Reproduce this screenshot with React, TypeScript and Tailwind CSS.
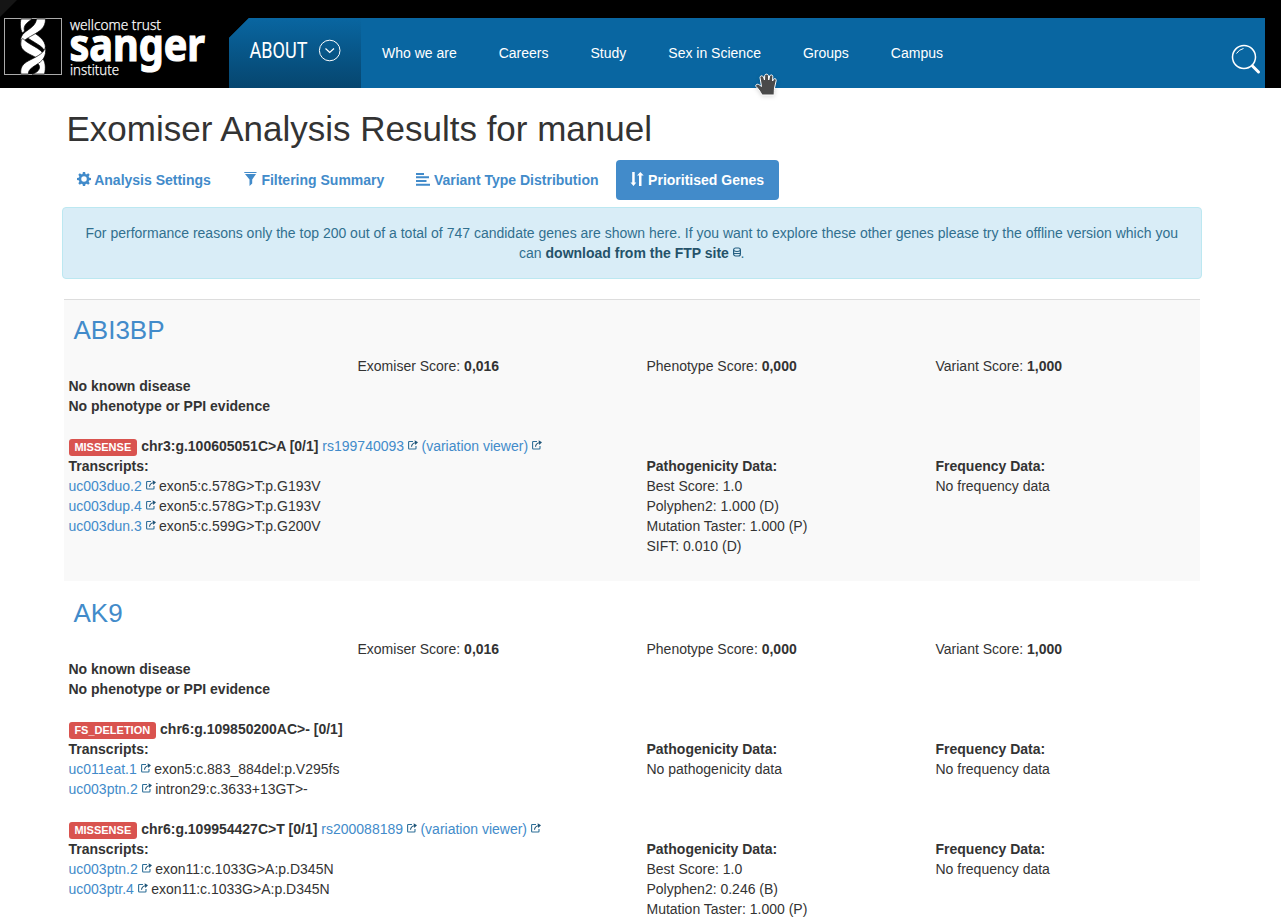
import React from "react";

const navItems = ["Who we are", "Careers", "Study", "Sex in Science", "Groups", "Campus"];

function Ext() {
  return (
    <svg className="ml-[3.900px] inline-block h-[10px] w-[10px] align-[1px]" viewBox="0 0 10 10" fill="none">
      <path d="M5 1.500H1.300Q.6 1.500 .6 2.200V8.300Q.6 9 1.300 9H7.300Q8 9 8 8.300V6" stroke="#2d6f98" strokeWidth="1.100" />
      <path d="M3.500 6.800C3.700 4.500 5 3 7.500 2.700" stroke="#1f5578" strokeWidth="1.100" />
      <path d="M6.600 .2L10 2.300L7.300 5Z" fill="#1f5578" />
    </svg>
  );
}

function Link({ children }: { children: React.ReactNode }) {
  return (
    <span className="whitespace-nowrap text-[#428bca]">
      {children}
      <Ext />
    </span>
  );
}

function Logo() {
  return (
    <svg className="h-[88px] w-[229px] shrink-0" viewBox="0 0 229 88">
      <path d="M0 0H17L0 17Z" fill="#151515" />
      <rect x="4.5" y="18.5" width="57" height="56" fill="none" stroke="#aaa" />
      <g fill="#fff" stroke="#000" strokeWidth=".7">
        <path d="M21 19H32L27.500 22.500C24.500 25 23.500 28 24.500 31L22.500 33C20 29 20 23 21 19Z" />
        <path d="M25 34.500L31.500 31C37 35 45.500 39 45.500 48V52C43 47 38 44.500 34 42C30 39.500 27 38 25 34.500Z" />
        <path d="M36.500 19H45.500C45.500 28 40 31 33 35C26 39 22 41 21 46C19.500 37 22 34 28 30C33 26.500 36 23.500 36.500 19Z" />
        <path d="M20.800 44C21 39.500 22 37.500 24 39.500C29 45 41 48 44 55L39 60C36 57 32 55.500 29 54C24 51 21 49 20.800 44Z" />
        <path d="M36 62L42 58C45.500 61 46 68 44.500 74H32C37 73 41 69 39 65Z" />
        <path d="M45.500 47C46.500 57 43 60.500 36 65C31 68 28 70.500 28.500 74H20.800C20 66 24 63 31 59.500C38 56 44 53 45.500 47Z" />
      </g>
      <g fill="#fff" fontFamily="Noto Sans, sans-serif">
        <text x="70" y="29.500" fontSize="15" fontWeight="300" stroke="#fff" strokeWidth=".25" textLength="91" lengthAdjust="spacingAndGlyphs">wellcome trust</text>
        <text x="69.500" y="60.500" fontSize="45" fontWeight="700" stroke="#fff" strokeWidth="1.200" textLength="135.500" lengthAdjust="spacingAndGlyphs">sanger</text>
        <text x="70" y="75" fontSize="15" fontWeight="300" stroke="#fff" strokeWidth=".25" textLength="49" lengthAdjust="spacingAndGlyphs">institute</text>
      </g>
    </svg>
  );
}

function Header() {
  return (
    <header className="relative flex h-[88px] bg-black text-white">
      <Logo />
      <nav className="mt-[18px] flex h-[70px] w-[1036px] bg-[#0966a1] [clip-path:polygon(20px_0,100%_0,100%_100%,0_100%,0_20px)]">
        <div className="flex w-[132px] items-start bg-linear-to-b from-[#0966a1] to-[#06466f]">
          <svg className="h-[70px] w-[132px]" viewBox="0 0 132 70" fill="none">
            <text x="20.500" y="40.300" fill="#fff" fontFamily="Roboto, sans-serif" fontSize="21.500" textLength="58" lengthAdjust="spacingAndGlyphs">ABOUT</text>
            <circle cx="100.700" cy="32.500" r="10.300" stroke="#fff" />
            <path d="M96.500 30.500L100.700 34.500L105 30.500" stroke="#fff" strokeWidth="1.200" />
          </svg>
        </div>
        <ul className="flex flex-1 gap-[42px] pt-[25px] pl-[21px] text-[14px] leading-5">
          {navItems.map((n) => <li key={n}>{n}</li>)}
        </ul>
        <svg className="mt-[25px] mr-[3px] h-[34px] w-[32px]" viewBox="0 0 32 34" fill="none" stroke="#fff">
          <circle cx="14" cy="14" r="11.500" strokeWidth="1.500" />
          <path d="M6.500 10.500Q9 6.500 13.500 5.500" strokeWidth="1" />
          <path d="M22.500 23L28.500 29" strokeWidth="3" strokeLinecap="round" />
        </svg>
      </nav>
      <svg className="absolute top-[70px] left-[752px] h-[30px] w-[28px] drop-shadow-sm" viewBox="0 0 28 30">
        <path d="M10 25C8 21 6 18.500 4 16.500C3 14.500 5.500 13.500 7.500 15L9.500 16.500L8 7.500C8 5.500 10.700 5.200 11.500 7L12.500 10L12.700 5.500C13 3.700 16 3.700 16.400 5.500L16.700 10L17.700 6C18.300 4.200 21 4.800 20.800 6.500L20.600 11L21.300 9.500C22.200 8 24.500 8.600 24.200 10.500L22.500 18C22.300 20.500 22.200 22 22.200 25Z" fill="#4a4a4a" stroke="#fff" strokeWidth="1" />
      </svg>
    </header>
  );
}

function TabIcon({ kind }: { kind: number }) {
  return (
    <svg className="-ml-[.5px] mr-[3.700px] mb-[2px] h-[14px] w-[14px]" viewBox="0 0 14 14" fill="currentColor">
      {kind === 0 && (
        <>
          <circle cx="7" cy="7" r="4" fill="none" stroke="currentColor" strokeWidth="2.500" />
          <path d="M5.900 0H8.100L8.600 2.500H5.400ZM5.900 14H8.100L8.600 11.500H5.400ZM0 5.900V8.100L2.500 8.600V5.400ZM14 5.900V8.100L11.500 8.600V5.400ZM1.300 2.800L2.800 1.300L5 2.800L2.800 5ZM12.700 2.800L11.200 1.300L9 2.800L11.200 5ZM1.300 11.200L2.800 12.700L5 11.200L2.800 9ZM12.700 11.200L11.200 12.700L9 11.200L11.200 9Z" />
        </>
      )}
      {kind === 1 && <path d="M.3 0H12.500V1H.3ZM1 2H12L8.200 7.500V11.500L5.500 14V7.500Z" />}
      {kind === 2 && <path d="M0 1H8V2.900H0ZM0 4.300H13V6.200H0ZM0 8H10.500V9.900H0ZM0 11.800H14V13.700H0Z" />}
      {kind === 3 && <path d="M2.200 0H4.700V10.500H6.300L3.500 14L.5 10.500H2.200ZM9 14H11.500V3.500H13.700L10.300 0L7 3.500H9Z" />}
    </svg>
  );
}

const tabs = ["Analysis Settings", "Filtering Summary", "Variant Type Distribution", "Prioritised Genes"];

type Variant = {
  kind: string;
  name: string;
  rs?: string;
  transcripts: [string, string][];
  pathogenicity: string[];
};

function VariantBlock({ v }: { v: Variant }) {
  return (
    <div className="mb-5">
      <div className="h-5 whitespace-nowrap">
        <span className="mr-[4px] inline-block h-[17px] rounded-[3px] bg-[#d9534f] px-[5.900px] align-bottom text-[11px] leading-[17px] font-bold text-white">{v.kind}</span>
        <b>{v.name}</b>
        {v.rs && <> <Link>{v.rs}</Link><span className="ml-[3.500px]"><Link>(variation viewer)</Link></span></>}
      </div>
      <div className="grid grid-cols-[578px_289px_1fr]">
        <div>
          <b className="block">Transcripts:</b>
          {v.transcripts.map(([id, text]) => (
            <div key={id} className="h-5"><Link>{id}</Link><span className="ml-[3.500px]">{text}</span></div>
          ))}
        </div>
        <div>
          <b className="block">Pathogenicity Data:</b>
          {v.pathogenicity.map((p) => <div key={p}>{p}</div>)}
        </div>
        <div>
          <b className="block">Frequency Data:</b>
          <div>No frequency data</div>
        </div>
      </div>
    </div>
  );
}

function Gene({ name, variants, shaded }: { name: string; variants: Variant[]; shaded?: boolean }) {
  return (
    <section className={shaded ? "border-t border-[#ddd] bg-[#f9f9f9] px-[4.500px] pb-[5px]" : "border-t-2 border-white px-[4.500px]"}>
      <h3 className="h-[56px] pt-[15px] pl-[5px] text-[26px] leading-[31px] text-[#428bca]">{name}</h3>
      <div className="grid grid-cols-[289px_289px_289px_1fr]">
        <span />
        <span>Exomiser Score: <b>0,016</b></span>
        <span>Phenotype Score: <b>0,000</b></span>
        <span>Variant Score: <b>1,000</b></span>
      </div>
      <b className="block">No known disease</b>
      <b className="mb-5 block">No phenotype or PPI evidence</b>
      {variants.map((v) => <VariantBlock key={v.name} v={v} />)}
    </section>
  );
}

const abi: Variant[] = [
  {
    kind: "MISSENSE",
    name: "chr3:g.100605051C>A [0/1]",
    rs: "rs199740093",
    transcripts: [["uc003duo.2", "exon5:c.578G>T:p.G193V"], ["uc003dup.4", "exon5:c.578G>T:p.G193V"], ["uc003dun.3", "exon5:c.599G>T:p.G200V"]],
    pathogenicity: ["Best Score: 1.0", "Polyphen2: 1.000 (D)", "Mutation Taster: 1.000 (P)", "SIFT: 0.010 (D)"],
  },
];

const ak9: Variant[] = [
  {
    kind: "FS_DELETION",
    name: "chr6:g.109850200AC>- [0/1]",
    transcripts: [["uc011eat.1", "exon5:c.883_884del:p.V295fs"], ["uc003ptn.2", "intron29:c.3633+13GT>-"]],
    pathogenicity: ["No pathogenicity data"],
  },
  {
    kind: "MISSENSE",
    name: "chr6:g.109954427C>T [0/1]",
    rs: "rs200088189",
    transcripts: [["uc003ptn.2", "exon11:c.1033G>A:p.D345N"], ["uc003ptr.4", "exon11:c.1033G>A:p.D345N"]],
    pathogenicity: ["Best Score: 1.0", "Polyphen2: 0.246 (B)", "Mutation Taster: 1.000 (P)"],
  },
];

export default function App() {
  return (
    <div className="h-[923px] w-[1281px] overflow-hidden bg-white font-['Liberation_Sans',Arial,sans-serif] text-[14px] leading-5 text-[#333]">
      <Header />
      <main className="ml-[62px] w-[1140px]">
        <h1 className="h-[72px] pt-[21px] pl-[4.500px] text-[35px] leading-[40px]">Exomiser Analysis Results for manuel</h1>
        <div className="flex h-10 gap-[2px]">
          {tabs.map((t, i) => (
            <div key={t} className={i === 3 ? "flex items-center rounded-[4px] bg-[#428bca] px-[15px] font-bold text-white" : i === 0 ? "flex items-center rounded-[4px] pr-[16.300px] pl-[15px] font-bold text-[#428bca]" : "flex items-center rounded-[4px] pr-[15.400px] pl-[15px] font-bold text-[#428bca]"}>
              <TabIcon kind={i} />
              {t}
            </div>
          ))}
        </div>
        <div className="mt-[7px] h-[72px] rounded-[4px] border border-[#bce8f1] bg-[#d9edf7] py-[15px] pr-[15.500px] pl-[15px] text-center text-[#31708f]">
          For performance reasons only the top 200 out of a total of 747 candidate genes are shown here. If you want to explore these other genes please try the offline version which you can <b className="text-[#245269]">download from the FTP site</b>
          <svg className="ml-[3.700px] inline-block h-[10px] w-[8px] align-[1px]" viewBox="0 0 8 10" fill="none" stroke="#245f82" strokeWidth="1.200">
            <rect x=".6" y="1" width="6.800" height="8" rx="2" />
            <path d="M.6 3.500Q4 5.500 7.400 3.500M.6 6.500H7.400" />
          </svg>.
        </div>
        <div className="mx-[2px] mt-5">
          <Gene name="ABI3BP" variants={abi} shaded />
          <Gene name="AK9" variants={ak9} />
        </div>
      </main>
    </div>
  );
}
